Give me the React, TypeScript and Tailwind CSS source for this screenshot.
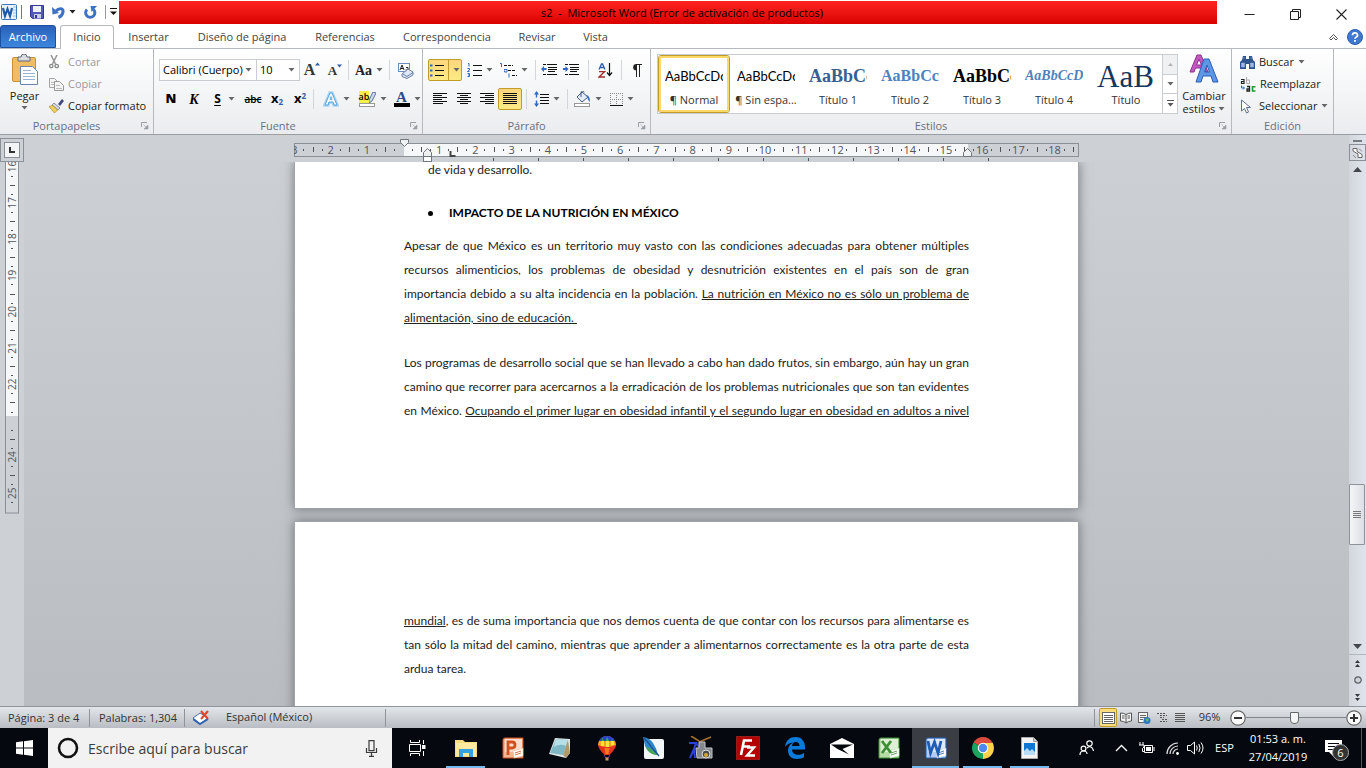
import React from 'react';
import type { ReactNode } from 'react';

const INK = '#3b3b3b';

/* ---------- small building blocks ---------- */

function Svg({ w, h, children }: { w: number; h: number; children: ReactNode }) {
  return (
    <svg width={w} height={h} viewBox={`0 0 ${w} ${h}`} className="block shrink-0" aria-hidden="true">
      {children}
    </svg>
  );
}

function Caret({ color = '#666' }: { color?: string }) {
  return (
    <Svg w={7} h={4}>
      <path d="M0.5 0h6L3.5 3.5z" fill={color} />
    </Svg>
  );
}

interface ToolProps {
  label: string;
  width: string;
  caret?: boolean;
  active?: boolean;
  children: ReactNode;
}

function Tool({ label, width, caret, active, children }: ToolProps) {
  return (
    <button
      type="button"
      aria-label={label}
      className={`flex h-[22px] shrink-0 items-center justify-center gap-1 ${width} ${
        active ? 'rounded-[2px] border border-[#c29b29] bg-linear-to-b from-[#fbd67c] to-[#fdea87]' : ''
      }`}
    >
      {children}
      {active && caret && <span className="h-full w-px bg-[#c29b29]" />}
      {caret && <Caret />}
    </button>
  );
}

function Sep() {
  return <span className="mx-[2px] h-5 w-px shrink-0 bg-[#d3d6da]" />;
}

function Launcher({ label }: { label: string }) {
  return (
    <button type="button" aria-label={label} className="absolute right-1 bottom-1">
      <Svg w={9} h={9}>
        <path d="M1.5 6V1.5H7" fill="none" stroke="#999ea5" />
        <path d="M3.5 3.5l3 3M8 4v4H4z" fill="#999ea5" stroke="#999ea5" strokeWidth="0.6" />
      </Svg>
    </button>
  );
}

interface GroupProps {
  title: string;
  width: string;
  launcher?: boolean;
  children: ReactNode;
}

function Group({ title, width, launcher, children }: GroupProps) {
  return (
    <section
      aria-label={title}
      className={`relative flex shrink-0 flex-col border-r border-[#b6babf] ${width}`}
    >
      <div className="flex-1">{children}</div>
      <div className={`h-4 text-center leading-4 text-[#6a6f80] ${launcher ? 'pr-5' : ''}`}>{title}</div>
      {launcher && <Launcher label={`Opciones de ${title}`} />}
    </section>
  );
}

/* ---------- title bar ---------- */

function WordLogo() {
  return (
    <Svg w={16} h={16}>
      <rect x="0.5" y="0.5" width="15" height="15" rx="1" fill="#e9f2fb" stroke="#3b78b9" />
      <path d="M12 3h3M12 6h3M12 9h3M12 12h3" stroke="#9dbfe3" />
      <path d="M2 4l2 8 2.5-7 2.5 7 2-8" fill="none" stroke="#1e5aa8" strokeWidth="2.200" />
    </Svg>
  );
}

function TitleBar() {
  return (
    <header className="flex h-6 shrink-0 bg-white">
      <div className="flex w-[119px] shrink-0 items-center pl-px">
        <WordLogo />
        <span className="mx-1 h-[14px] w-px bg-[#777]" />
        <button type="button" aria-label="Guardar" className="ml-1">
          <Svg w={14} h={14}>
            <path d="M0.5 0.5h13v13h-11l-2-2z" fill="#5458b8" stroke="#34378f" />
            <path d="M3 1h8v6H3z" fill="#eef2fb" />
            <path d="M4 9h7v4.500H4z" fill="#c9cfe8" />
            <path d="M5 10h2v3H5z" fill="#34378f" />
          </Svg>
        </button>
        <button type="button" aria-label="Deshacer" className="ml-2 flex items-center gap-1">
          <Svg w={13} h={13}>
            <path d="M4 5C7 1.500 11.500 2 11 6 10.700 8.500 9 10.500 6.500 11.500" fill="none" stroke="#3d72c6" strokeWidth="3" />
            <path d="M0 1l.5 7.500L7 7z" fill="#3d72c6" />
          </Svg>
          <Caret color="#222" />
        </button>
        <button type="button" aria-label="Rehacer" className="ml-2">
          <Svg w={13} h={13}>
            <path d="M3 3.500a4.600 4.600 0 1 0 6.500 0" fill="none" stroke="#3d72c6" strokeWidth="3" />
            <path d="M6.500 0H13L7.500 6z" fill="#3d72c6" />
          </Svg>
        </button>
        <span className="ml-2 h-[14px] w-px bg-[#999]" />
        <button type="button" aria-label="Personalizar barra" className="ml-1">
          <Svg w={7} h={8}>
            <path d="M0 0.500h7" stroke="#111" />
            <path d="M0 3.500h7L3.500 7z" fill="#111" />
          </Svg>
        </button>
      </div>
      <h1 className="mt-px flex flex-1 items-center justify-center overflow-hidden bg-linear-to-b from-[#ff231f] to-[#d90000] pt-px pl-7 whitespace-pre text-black">
        {'s2  -  Microsoft Word (Error de activación de productos)'}
      </h1>
      <div className="flex w-[149px] shrink-0 items-end justify-end pr-[2px]">
        <button type="button" aria-label="Minimizar" className="flex w-[46px] justify-center pb-1">
          <Svg w={11} h={11}>
            <path d="M0.500 5.500h10" stroke="#222" />
          </Svg>
        </button>
        <button type="button" aria-label="Restaurar" className="flex w-[46px] justify-center pb-1">
          <Svg w={11} h={11}>
            <path d="M0.500 2.500h8v8h-8zM2.500 2.500v-2h8v8h-2" fill="none" stroke="#222" />
          </Svg>
        </button>
        <button type="button" aria-label="Cerrar" className="flex w-[46px] justify-center pb-1">
          <Svg w={11} h={11}>
            <path d="M0.500 0.500l10 10M10.500 0.500l-10 10" stroke="#222" strokeWidth="1.100" />
          </Svg>
        </button>
      </div>
    </header>
  );
}

/* ---------- tabs ---------- */

const TABS = [
  { name: 'Insertar', width: 'w-[69px]' },
  { name: 'Diseño de página', width: 'w-[118px]' },
  { name: 'Referencias', width: 'w-[88px]' },
  { name: 'Correspondencia', width: 'w-[116px]' },
  { name: 'Revisar', width: 'w-16' },
  { name: 'Vista', width: 'w-[53px]' },
];

function TabRow() {
  return (
    <nav className="flex h-[25px] shrink-0 items-stretch border-b border-[#b6babf] bg-white pt-px text-[#444]">
      <button
        type="button"
        className="w-14 rounded-t-[3px] border border-[#1d4f9f] bg-linear-to-b from-[#2a62bb] to-[#3c86dc] pt-px text-white"
      >
        Archivo
      </button>
      <button
        type="button"
        className="-mb-px ml-1 w-[54px] rounded-t-[3px] border border-b-0 border-[#b6babf] bg-white"
      >
        Inicio
      </button>
      {TABS.map((tab) => (
        <button key={tab.name} type="button" className={`pt-[2px] whitespace-nowrap ${tab.width}`}>
          {tab.name}
        </button>
      ))}
      <div className="ml-auto flex items-center gap-2 pr-[3px]">
        <button type="button" aria-label="Minimizar cinta">
          <Svg w={11} h={8}>
            <path d="M1.500 5.500l4-4 4 4-1.500 1.500-2.500-2.500L3 7z" fill="#fff" stroke="#555" />
          </Svg>
        </button>
        <button type="button" aria-label="Ayuda">
          <Svg w={16} h={16}>
            <circle cx="8" cy="8" r="7.500" fill="#3f78d0" stroke="#2c5fb4" />
            <path d="M5.500 6.200a2.500 2.300 0 1 1 3.500 2.100q-1 .5-1 1.400" fill="none" stroke="#fff" strokeWidth="1.700" />
            <rect x="7.100" y="11" width="1.800" height="1.800" fill="#fff" />
          </Svg>
        </button>
      </div>
    </nav>
  );
}

/* ---------- ribbon groups ---------- */

function Clipboard() {
  return (
    <Group title="Portapapeles" width="w-[154px]" launcher>
      <div className="flex pt-[2px]">
        <button type="button" className="flex w-[49px] flex-col items-center pt-[3px] text-[#222]">
          <Svg w={28} h={32}>
            <rect x="1.500" y="3.500" width="23" height="24" rx="1.500" fill="#f0bd62" stroke="#c98f36" />
            <path d="M7 3h3a3 3 0 0 1 6 0h3v4H7z" fill="#d9dde2" stroke="#60666e" />
            <path d="M9.500 12.500h12l5 5v13h-17z" fill="#fff" stroke="#7084a5" />
            <path d="M12 16.500h8M12 19.500h12M12 22.500h12M12 25.500h12" stroke="#9db3d4" />
          </Svg>
          <span className="mt-[2px] leading-4">Pegar</span>
          <span className="mt-[2px]">
            <Caret />
          </span>
        </button>
        <div className="flex flex-col">
          <button type="button" disabled className="flex h-[22px] items-center gap-[9px] text-[#9a9a9a]">
            <Svg w={10} h={14}>
              <path d="M2 0l4.500 9M8 0L3.500 9" stroke="#9a9a9a" strokeWidth="1.600" />
              <circle cx="2.300" cy="11" r="1.700" fill="none" stroke="#888" strokeWidth="1.300" />
              <circle cx="7.700" cy="11" r="1.700" fill="none" stroke="#888" strokeWidth="1.300" />
            </Svg>
            Cortar
          </button>
          <button type="button" disabled className="flex h-[22px] items-center gap-1 text-[#9a9a9a]">
            <Svg w={15} h={13}>
              <path d="M0.500 0.500h5l3 3v6h-8z" fill="#f4f4f4" stroke="#a5a5a5" />
              <path d="M5.500 3.500h5l4 4v5h-9z" fill="#f4f4f4" stroke="#999" />
              <path d="M7 7.500h4M7 10.500h6M2 4.500h3M2 6.500h3" stroke="#bbb" />
            </Svg>
            Copiar
          </button>
          <button type="button" className="flex h-[22px] items-center gap-1 whitespace-nowrap text-[#222]">
            <Svg w={15} h={14}>
              <path d="M9 5l4-5 2 2-4 5z" fill="#444a7c" />
              <path d="M5 4l6 5-2 2-6-5z" fill="#d3d7de" stroke="#73798a" strokeWidth="0.800" />
              <path d="M3.500 6.500l5 4.500-3 3L0 7.500z" fill="#efd25d" stroke="#b9912b" strokeWidth="0.800" />
            </Svg>
            Copiar formato
          </button>
        </div>
      </div>
    </Group>
  );
}

function Combo({ label, value, width }: { label: string; value: string; width: string }) {
  return (
    <div className={`relative h-[22px] border border-[#c9ccd1] bg-white ${width}`}>
      <select aria-label={label} defaultValue={value} className="h-full w-full appearance-none pl-[3px] text-black">
        <option>{value}</option>
      </select>
      <span className="pointer-events-none absolute top-2 right-1">
        <Caret />
      </span>
    </div>
  );
}

function FontGroup() {
  return (
    <Group title="Fuente" width="w-[269px]" launcher>
      <div className="flex items-center pt-[10px] pl-[5px]">
        <Combo label="Fuente" value="Calibri (Cuerpo)" width="w-[98px]" />
        <Combo label="Tamaño de fuente" value="10" width="-ml-px w-11" />
        <Tool label="Agrandar fuente" width="w-6">
          <span className="flex font-['Liberation_Serif'] text-[16px] leading-none font-bold text-[#333]">
            A
            <Svg w={5} h={4}>
              <path d="M0 3.500L2.500 0.500 5 3.500z" fill="#2f5da8" />
            </Svg>
          </span>
        </Tool>
        <Tool label="Encoger fuente" width="w-[22px]">
          <span className="flex font-['Liberation_Serif'] text-[13px] leading-none font-bold text-[#333]">
            A
            <Svg w={5} h={4}>
              <path d="M0 0.500L2.500 3.500 5 0.500z" fill="#2f5da8" />
            </Svg>
          </span>
        </Tool>
        <Sep />
        <Tool label="Cambiar mayúsculas" width="w-9" caret>
          <span className="font-['Liberation_Serif'] text-[14px] font-bold text-[#222]">Aa</span>
        </Tool>
        <Sep />
        <Tool label="Borrar formato" width="w-7">
          <Svg w={16} h={17}>
            <rect x="0.500" y="1.500" width="11" height="8" fill="#fff" stroke="#6d8cc0" />
            <path d="M2 8l2-5 2 5M2.500 6.500h3M8 5.500h2V8H7.500" fill="none" stroke="#222" />
            <path d="M4 12l6-5 5 3v3l-6 3.500-5-2z" fill="#dfe8f6" stroke="#6a7fa8" />
            <path d="M5 12l4 2.500 6-4" fill="none" stroke="#6a7fa8" />
          </Svg>
        </Tool>
      </div>
      <div className="flex items-center pt-[7px] pl-[5px] text-black">
        <Tool label="Negrita" width="w-6">
          <span className="text-[13px] font-extrabold">N</span>
        </Tool>
        <Tool label="Cursiva" width="w-[22px]">
          <span className="font-['Liberation_Serif'] text-[14px] font-bold italic">K</span>
        </Tool>
        <Tool label="Subrayado" width="w-9" caret>
          <span className="w-3 text-center text-[12px] font-bold underline underline-offset-2">S</span>
        </Tool>
        <Tool label="Tachado" width="w-6">
          <span className="text-[10px] font-semibold line-through">abc</span>
        </Tool>
        <Tool label="Subíndice" width="w-6">
          <span className="text-[13px] font-bold">
            x<sub className="text-[8px] text-[#2f5da8]">2</sub>
          </span>
        </Tool>
        <Tool label="Superíndice" width="w-[22px]">
          <span className="text-[13px] font-bold">
            x<sup className="text-[8px] text-[#2f5da8]">2</sup>
          </span>
        </Tool>
        <Sep />
        <Tool label="Efectos de texto" width="w-10" caret>
          <Svg w={16} h={16}>
            <path d="M2 14L7 2h2l5 12h-3l-1-3H6l-1 3z" fill="#fff" stroke="#a9d5f5" strokeWidth="3.500" />
            <path d="M2 14L7 2h2l5 12h-3l-1-3H6l-1 3z" fill="#f5fbff" stroke="#4d9bd6" strokeWidth="0.900" />
            <path d="M7 8.500h2L8 5.500z" fill="#fff" stroke="#4d9bd6" strokeWidth="0.800" />
          </Svg>
        </Tool>
        <Tool label="Color de resaltado" width="w-[34px]" caret>
          <span className="flex flex-col">
            <span className="flex h-3 items-end">
              <span className="bg-[#f8f04a] text-[9px] leading-3 font-semibold">ab</span>
              <Svg w={7} h={11}>
                <path d="M4 0l3 1-4 8-3 2V8z" fill="#cfdaec" stroke="#4d618e" strokeWidth="0.900" />
              </Svg>
            </span>
            <span className="h-1 w-4 border border-[#999] bg-white" />
          </span>
        </Tool>
        <Tool label="Color de fuente" width="w-[34px]" caret>
          <span className="flex flex-col items-center">
            <span className="h-3 font-['Liberation_Serif'] text-[15px] leading-3 font-bold text-[#2b4d8c]">A</span>
            <span className="h-1 w-4 bg-black" />
          </span>
        </Tool>
      </div>
    </Group>
  );
}

function Lines({ rows }: { rows: string }) {
  return (
    <Svg w={16} h={14}>
      <path d={rows} stroke="#111" strokeWidth="1" />
    </Svg>
  );
}

function IndentIcon({ right }: { right?: boolean }) {
  return (
    <Svg w={16} h={14}>
      <path d="M2 1.500h3M6 1.500h10M7 4.500h9M7 6.500h9M7 8.500h7M2 11.500h3M6 11.500h10" stroke="#111" />
      <path d={right ? 'M5.500 6L2.500 3v2H0v2h2.500v2z' : 'M0 6l3-3v2h2.500v2H3v2z'} fill="#2f67c4" />
    </Svg>
  );
}

function ParagraphGroup() {
  return (
    <Group title="Párrafo" width="w-[228px]" launcher>
      <div className="flex items-center pt-[10px] pl-[5px]">
        <Tool label="Viñetas" width="w-[34px]" caret active>
          <Svg w={14} h={14}>
            <path d="M5 2.500h9M5 7.500h9M5 12.500h9" stroke="#111" />
            <path d="M0 1.500h2.500v2H0zM0 6.500h2.500v2H0zM0 11.500h2.500v2H0z" fill="#2f67c4" />
          </Svg>
        </Tool>
        <Tool label="Numeración" width="w-9" caret>
          <Svg w={15} h={14}>
            <path d="M6 2.500h9M6 7.500h9M6 12.500h9" stroke="#111" />
            <path d="M1 .5h1v3M.5 5.500h2v1.500L.5 8.500h2M.5 10.500h2v3h-2M1 12h1.500" fill="none" stroke="#2f67c4" />
          </Svg>
        </Tool>
        <Tool label="Lista multinivel" width="w-[31px]" caret>
          <Svg w={17} h={15}>
            <path d="M4 2.500h9M8 7.500h8M12 12.500h5" stroke="#111" strokeDasharray="3 1" />
            <path d="M0 .5h1.500v3.500M4 6.500h3V9H4.500V7.500M9 10.500v4" fill="none" stroke="#2f67c4" />
          </Svg>
        </Tool>
        <span className="w-1" />
        <Sep />
        <Tool label="Disminuir sangría" width="w-[22px]">
          <IndentIcon />
        </Tool>
        <Tool label="Aumentar sangría" width="w-[22px]">
          <IndentIcon right />
        </Tool>
        <span className="w-1" />
        <Sep />
        <Tool label="Ordenar" width="w-7">
          <span className="flex items-center">
            <Svg w={8} h={15}>
              <path d="M1 6.500L3.500 1h1L7 6.500M2 4.500h4" fill="none" stroke="#2f5da8" strokeWidth="1.300" />
              <path d="M1 8.700h5.500L1 14h6" fill="none" stroke="#9c2c2c" strokeWidth="1.300" />
            </Svg>
            <Svg w={7} h={14}>
              <path d="M3.500 0v12M1 9.500l2.500 3L6 9.500" fill="none" stroke="#111" strokeWidth="1.200" />
            </Svg>
          </span>
        </Tool>
        <Sep />
        <Tool label="Mostrar todo" width="w-6">
          <Svg w={11} h={13}>
            <path d="M5 0.500h6M5.500 0v13M8.500 0v13" stroke="#222" />
            <path d="M5.500 0a3.300 3.300 0 1 0 0 6.600z" fill="#222" />
          </Svg>
        </Tool>
      </div>
      <div className="flex items-center pt-[7px] pl-[5px]">
        <Tool label="Alinear a la izquierda" width="w-6">
          <Lines rows="M1 1.500h14M1 3.500h9M1 5.500h14M1 7.500h9M1 9.500h14M1 11.500h10" />
        </Tool>
        <Tool label="Centrar" width="w-6">
          <Lines rows="M1 1.500h14M4 3.500h8M1 5.500h14M4 7.500h8M1 9.500h14M4 11.500h8" />
        </Tool>
        <Tool label="Alinear a la derecha" width="w-[22px]">
          <Lines rows="M1 1.500h14M6 3.500h9M1 5.500h14M6 7.500h9M1 9.500h14M6 11.500h9" />
        </Tool>
        <Tool label="Justificar" width="w-6" active>
          <Lines rows="M1 1.500h14M1 3.500h14M1 5.500h14M1 7.500h14M1 9.500h14M1 11.500h14" />
        </Tool>
        <span className="w-[2px]" />
        <Sep />
        <Tool label="Interlineado" width="w-9" caret>
          <Svg w={15} h={16}>
            <path d="M6 3.500h9M6 6.500h9M6 9.500h9M6 12.500h9" stroke="#111" />
            <path d="M2.500 0L5 3.500H3.200v3H1.800v-3H0zM2.500 16L5 12.500H3.200v-3H1.800v3H0z" fill="#2f67c4" />
          </Svg>
        </Tool>
        <Sep />
        <Tool label="Sombreado" width="w-9" caret>
          <Svg w={17} h={16}>
            <path d="M3 6l5-5 6 5-6 5z" fill="#e5ecf6" stroke="#44598a" />
            <path d="M7 6V1.500a1.500 1.500 0 0 1 3 0" fill="none" stroke="#44598a" />
            <path d="M12 4q4 0 4 7-2-1-3-5z" fill="#3a6fc0" />
            <rect x="0.500" y="12.500" width="15" height="3" fill="#fff" stroke="#999" />
          </Svg>
        </Tool>
        <Tool label="Bordes" width="w-8" caret>
          <Svg w={13} h={13}>
            <path d="M.5 0v12M6.500 0v12M12.500 0v12M0 .5h13M0 6.500h13" stroke="#888" strokeDasharray="1 1" />
            <path d="M0 12.500h13" stroke="#111" />
          </Svg>
        </Tool>
      </div>
    </Group>
  );
}

const STYLES = [
  { name: '¶ Normal', sample: 'AaBbCcDc', look: "font-['Lato'] text-[13px] text-black" },
  { name: '¶ Sin espa...', sample: 'AaBbCcDc', look: "font-['Lato'] text-[13px] text-black" },
  { name: 'Título 1', sample: 'AaBbCc', look: "font-['Liberation_Serif'] text-[18px] font-bold text-[#365f91]" },
  { name: 'Título 2', sample: 'AaBbCc', look: "font-['Liberation_Serif'] text-[16px] font-bold text-[#4f81bd]" },
  { name: 'Título 3', sample: 'AaBbCc', look: "font-['Liberation_Serif'] text-[18px] font-bold text-black" },
  { name: 'Título 4', sample: 'AaBbCcD', look: "font-['Liberation_Serif'] text-[14px] font-bold italic text-[#4f81bd]" },
  { name: 'Título', sample: 'AaB', look: "font-['Liberation_Serif'] text-[31px] text-[#17365d]" },
];

function StylesGroup() {
  return (
    <Group title="Estilos" width="w-[581px]" launcher>
      <div className="flex pt-[5px] pl-[6px]">
        <div className="flex h-[60px] w-[521px] border border-[#c9ccd1] bg-white">
          {STYLES.map((style, i) => (
            <button
              key={style.name}
              type="button"
              className={`flex w-[72px] flex-col items-center overflow-hidden rounded-[3px] px-[3px] pt-[4px] ${
                i === 0 ? 'border border-[#c29b29] outline-2 -outline-offset-3 outline-[#fbd867]' : 'border border-transparent'
              }`}
            >
              <span className={`flex h-8 w-[58px] items-center overflow-hidden leading-none whitespace-nowrap ${style.look}`}>
                {style.sample}
              </span>
              <span className="leading-4 whitespace-nowrap text-[#333]">{style.name}</span>
            </button>
          ))}
          <div className="flex flex-1 flex-col divide-y divide-[#c9ccd1] border-l border-[#c9ccd1]">
            <button type="button" aria-label="Arriba" className="flex flex-1 items-center justify-center bg-[#f0f1f3]">
              <Svg w={5} h={3}>
                <path d="M0 3h5L2.500 0z" fill="#b0b3b8" />
              </Svg>
            </button>
            <button type="button" aria-label="Abajo" className="flex flex-1 items-center justify-center">
              <Caret />
            </button>
            <button type="button" aria-label="Más estilos" className="flex flex-1 items-center justify-center">
              <Svg w={7} h={7}>
                <path d="M0 .5h7" stroke="#555" />
                <path d="M.5 3h6L3.500 6.500z" fill="#555" />
              </Svg>
            </button>
          </div>
        </div>
        <button type="button" className="flex w-[52px] flex-col items-center text-[#222]">
          <Svg w={30} h={30}>
            <path d="M1 18L8 1h4l7 17h-4l-1.500-4h-7L5 18zM7.500 11h5L10 5z" fill="#c45ac0" stroke="#8e2d91" />
            <path d="M7 28L15 5h5l9 23h-5l-2-6h-8l-2 6zM15.500 18h5l-2.500-7z" fill="#5d97e6" stroke="#2b5fb5" />
          </Svg>
          <span className="mt-[5px] leading-[13px]">Cambiar</span>
          <span className="flex items-center gap-[3px] leading-[13px]">
            estilos <Caret />
          </span>
        </button>
      </div>
    </Group>
  );
}

function EditingGroup() {
  return (
    <Group title="Edición" width="w-[102px]">
      <div className="flex flex-col pt-[2px] pl-2 text-[#222]">
        <button type="button" className="flex h-[22px] items-center gap-1">
          <Svg w={15} h={13}>
            <path d="M3 0h3v3h3V0h3l1 4 2 2v7H9V8H6v5H0V6l2-2z" fill="#2e538f" />
            <path d="M1.500 7h3v4h-3zM10.500 7h3v4h-3zM4 1v2M11 1v2" fill="#9db9e2" stroke="#9db9e2" strokeWidth="0.500" />
          </Svg>
          Buscar <Caret />
        </button>
        <button type="button" className="flex h-[22px] items-center gap-1">
          <Svg w={16} h={15}>
            <path d="M1 2.500h3v4H1.500v-2H4" fill="none" stroke="#222" strokeWidth="1.200" />
            <path d="M6.500 0v6.500h3v-3.500H7" fill="none" stroke="#aaa" />
            <path d="M1.500 8.500v2.500H4M3 9.500L4.500 11 3 12.500" fill="none" stroke="#2f67c4" />
            <path d="M7 9.500h2.500v4.500H7v-2h2.500" fill="none" stroke="#222" strokeWidth="1.300" />
            <path d="M15.500 9.700h-3v4.300h3" fill="none" stroke="#1d9c2c" strokeWidth="1.600" />
          </Svg>
          <span>Reemplazar</span>
        </button>
        <button type="button" className="flex h-[22px] items-center gap-2">
          <Svg w={11} h={15}>
            <path d="M1.500 1v11l3-2.500 2 4.500 2-1-2-4.500h4z" fill="#fff" stroke="#5b7093" />
          </Svg>
          <span>Seleccionar</span>
          <span className="-ml-1">
            <Caret />
          </span>
        </button>
      </div>
    </Group>
  );
}

/* ---------- work area ---------- */

const CM = 36.2;

function scaleMarks(origin: number, from: number, to: number, step: number) {
  const marks: { at: number; n: number; kind: 'num' | 'half' | 'dot' }[] = [];
  for (let q = from * 4; q <= to * 4; q += 1) {
    const kind = q % 4 === 0 ? 'num' : q % 2 === 0 ? 'half' : 'dot';
    marks.push({ at: origin + (q / 4) * step, n: Math.abs(q / 4), kind });
  }
  return marks;
}

function HorizontalRuler() {
  const marks = scaleMarks(109, -3, 18.5, CM).filter((m) => !(m.kind === 'num' && m.n === 0));
  return (
    <svg width="785" height="24" viewBox="0 0 785 24" className="block" aria-label="Regla horizontal">
      <rect x="0.5" y="5.5" width="784" height="13" fill="#cdd0d5" stroke="#8a9097" />
      <rect x="110" y="6" width="564" height="12" fill="#f6f7f8" />
      {marks.map((m) =>
        m.kind === 'num' ? (
          <text key={m.at} x={m.at} y="16" textAnchor="middle" fontSize="11" fill="#50555c">
            {m.n}
          </text>
        ) : (
          <rect
            key={m.at}
            x={Math.round(m.at)}
            y={m.kind === 'half' ? 9 : 11}
            width="1"
            height={m.kind === 'half' ? 5 : 2}
            fill="#50555c"
          />
        ),
      )}
      {Array.from({ length: 12 }, (_, i) => (
        <rect key={i} x={200 + i * 45 - 1} y="20" width="1" height="3" fill="#50555c" />
      ))}
      <path d="M156.500 13v5h5" fill="none" stroke="#444" strokeWidth="2" />
      <path d="M106.500 1.500h8v3l-4 4-4-4z" fill="#eef0f2" stroke="#71767d" />
      <path d="M129.500 18.500v-4l4-4 4 4v4z" fill="#eef0f2" stroke="#71767d" />
      <rect x="129.500" y="18.500" width="8" height="5" fill="#fff" stroke="#71767d" />
      <path d="M669.500 18.500v-4l4-4 4 4v4z" fill="#eef0f2" stroke="#71767d" />
    </svg>
  );
}

function VerticalRuler() {
  const marks = scaleMarks(4.5, 0, 9.25, 36.3).filter((m) => !(m.kind === 'num' && m.n === 7));
  return (
    <svg width="14" height="352" viewBox="0 0 14 352" className="block" aria-label="Regla vertical">
      <rect x="0.5" y="-1" width="13" height="352" fill="#cdd0d5" stroke="#8a9097" />
      <rect x="1" y="0" width="12" height="254" fill="#f6f7f8" />
      {marks.map((m) =>
        m.kind === 'num' ? (
          <text
            key={m.at}
            x="0"
            y="0"
            transform={`translate(11 ${m.at}) rotate(-90)`}
            textAnchor="middle"
            fontSize="10"
            fill="#50555c"
          >
            {m.n + 16}
          </text>
        ) : (
          <rect
            key={m.at}
            x={m.kind === 'half' ? 5 : 6}
            y={Math.round(m.at)}
            width={m.kind === 'half' ? 5 : 2}
            height="1"
            fill="#50555c"
          />
        ),
      )}
    </svg>
  );
}

function Line({ children, last }: { children: ReactNode; last?: boolean }) {
  return (
    <span className={`block whitespace-nowrap ${last ? '' : '[text-align-last:justify]'}`}>{children}</span>
  );
}

const SHEET = 'mx-auto w-[785px] border border-[#a0a4aa] bg-white pr-[109px] pl-[109px] shadow-[0_0_10px_rgba(60,65,72,0.6)]';

function Pages() {
  return (
    <main className="min-h-0 flex-1 overflow-hidden font-['Lato',sans-serif] text-[12px] leading-6 text-[#222] [font-variant-ligatures:none]">
      <article className={`h-[347px] border-t-0 ${SHEET}`}>
        <p className="pl-6 leading-4">de vida y desarrollo.</p>
        <h2 className="mt-[23px] flex items-center pl-6 font-bold text-black">
          <span className="mr-4 size-[5px] rounded-full bg-black" />
          IMPACTO DE LA NUTRICIÓN EN MÉXICO
        </h2>
        <p className="mt-[9px]">
          <Line>Apesar de que México es un territorio muy vasto con las condiciones adecuadas para obtener múltiples</Line>
          <Line>recursos alimenticios, los problemas de obesidad y desnutrición existentes en el país son de gran</Line>
          <Line>
            importancia debido a su alta incidencia en la población. <u>La nutrición en México no es sólo un problema de</u>
          </Line>
          <Line last>
            <u className="whitespace-pre">alimentación, sino de educación. </u>
          </Line>
        </p>
        <p className="mt-[21px]">
          <Line>Los programas de desarrollo social que se han llevado a cabo han dado frutos, sin embargo, aún hay un gran</Line>
          <Line>camino que recorrer para acercarnos a la erradicación de los problemas nutricionales que son tan evidentes</Line>
          <Line>
            en México. <u>Ocupando el primer lugar en obesidad infantil y el segundo lugar en obesidad en adultos a nivel</u>
          </Line>
        </p>
      </article>
      <article className={`mt-3 h-[400px] pt-[87px] ${SHEET}`}>
        <p>
          <Line>
            <u>mundial</u>, es de suma importancia que nos demos cuenta de que contar con los recursos para alimentarse es
          </Line>
          <Line>tan sólo la mitad del camino, mientras que aprender a alimentarnos correctamente es la otra parte de esta</Line>
          <Line last>ardua tarea.</Line>
        </p>
      </article>
    </main>
  );
}

function ScrollColumn() {
  return (
    <aside className="flex w-[17px] shrink-0 flex-col items-center bg-linear-to-r from-[#d3d7dd] to-[#dfe3ec]">
      <span className="mt-[5px] h-[2px] w-[9px] bg-[#777c84]" />
      <button type="button" aria-label="Regla" className="mt-[2px] border border-[#8a9097] p-[2px]">
        <Svg w={11} h={11}>
          <path d="M1 1.500h4v3l5 3v3H6V7L1 4z" fill="#fff" stroke="#666" />
          <path d="M7 1.500l3 3M1 8l3 3" stroke="#888" />
        </Svg>
      </button>
      <button type="button" aria-label="Desplazar arriba" className="mt-[6px]">
        <Svg w={9} h={5}>
          <path d="M0 5h9L4.500 0z" fill="#44484e" />
        </Svg>
      </button>
      <div className="flex w-full flex-1 flex-col">
        <div className="flex-[310]" />
        <div className="flex h-[61px] w-4 flex-col items-center justify-center gap-px rounded-[1px] border border-[#8d929b] bg-linear-to-r from-[#f4f5f7] to-[#dcdfe5]">
          <span className="h-px w-2 bg-[#777]" />
          <span className="h-px w-2 bg-[#777]" />
          <span className="h-px w-2 bg-[#777]" />
          <span className="h-px w-2 bg-[#777]" />
        </div>
        <div className="flex-[98]" />
      </div>
      <button type="button" aria-label="Desplazar abajo">
        <Svg w={9} h={5}>
          <path d="M0 0h9L4.500 5z" fill="#44484e" />
        </Svg>
      </button>
      <div className="mt-[5px] flex h-[52px] w-full flex-col items-center justify-around border-t border-[#b2b6bd]">
        <button type="button" aria-label="Página anterior">
          <Svg w={7} h={7}>
            <path d="M1 3h5L3.500 0zM1 7h5L3.500 4z" fill="#33373d" />
          </Svg>
        </button>
        <button type="button" aria-label="Objeto de búsqueda">
          <Svg w={8} h={8}>
            <circle cx="4" cy="4" r="3.200" fill="#d0d3d8" stroke="#5c6168" strokeWidth="1.200" />
          </Svg>
        </button>
        <button type="button" aria-label="Página siguiente">
          <Svg w={7} h={7}>
            <path d="M1 0h5L3.500 3zM1 4h5L3.500 7z" fill="#33373d" />
          </Svg>
        </button>
      </div>
    </aside>
  );
}

function WorkArea() {
  return (
    <div className="flex min-h-0 flex-1 overflow-hidden border-t border-[#9a9ea4] bg-linear-to-b from-[#cdd1d5] to-[#b9bcc0]">
      <div className="flex w-6 shrink-0 flex-col items-center bg-[#cdd1d5] pt-[3px]">
        <button type="button" aria-label="Tabulación" className="h-6 w-6 border border-[#8a9097] p-[3px]">
          <span className="flex h-full w-full items-center justify-center border border-[#8a9097] bg-[#f3f4f5]">
            <Svg w={6} h={6}>
              <path d="M1 0v5h5" fill="none" stroke="#333" strokeWidth="2" />
            </Svg>
          </span>
        </button>
        <VerticalRuler />
      </div>
      <div className="flex min-w-0 flex-1 flex-col">
        <div className="flex h-[27px] shrink-0 justify-center pt-[3px]">
          <HorizontalRuler />
        </div>
        <Pages />
      </div>
      <ScrollColumn />
    </div>
  );
}

/* ---------- status bar ---------- */

function ViewButton({ label, active, children }: { label: string; active?: boolean; children: ReactNode }) {
  return (
    <button
      type="button"
      aria-label={label}
      className={`flex h-[19px] w-[18px] shrink-0 items-center justify-center ${
        active ? 'rounded-[2px] border border-[#c29b29] bg-[#fcdc7c]' : ''
      }`}
    >
      {children}
    </button>
  );
}

function StatusBar() {
  const divider = 'border-r border-[#8f949b]';
  return (
    <footer className="flex h-[22px] shrink-0 items-center border-t border-[#8f949b] bg-linear-to-b from-[#e3e6ea] to-[#b9bdc3] text-[#333]">
      <div className={`h-[18px] w-[90px] pl-2 leading-[18px] ${divider}`}>Página: 3 de 4</div>
      <div className={`h-[18px] w-[95px] pl-[9px] leading-[18px] ${divider}`}>Palabras: 1,304</div>
      <div className={`flex h-[18px] w-[201px] items-center gap-4 pl-2 ${divider}`}>
        <Svg w={17} h={15}>
          <path d="M0 8l7-5 8 5-8 6z" fill="#fff" stroke="#4671b8" />
          <path d="M0 9l7 5 8-5" fill="none" stroke="#3161b5" strokeWidth="2" />
          <path d="M8 1l7 8M15 1L8 9" stroke="#e4452c" strokeWidth="2" />
        </Svg>
        Español (México)
      </div>
      <div className={`h-[18px] flex-1 ${divider}`} />
      <div className="flex w-[271px] shrink-0 items-center pl-1">
        <ViewButton label="Diseño de impresión" active>
          <Svg w={13} h={12}>
            <rect x="0.500" y="0.500" width="12" height="11" fill="#fff" stroke="#666" />
            <path d="M2 3.500h9M2 5.500h9M2 7.500h9M2 9.500h9" stroke="#666" />
          </Svg>
        </ViewButton>
        <ViewButton label="Lectura">
          <Svg w={12} h={12}>
            <path d="M.5 1q3 0 5.500 1.500Q8.500 1 11.500 1v8Q8 9 6 11 4 9 .5 9zM6 2.500V11M2 4h2.500M2 6h2.500M7.500 4H10M7.500 6H10" fill="#f4f4f4" stroke="#555" />
          </Svg>
        </ViewButton>
        <ViewButton label="Diseño web">
          <Svg w={13} h={12}>
            <rect x="0.500" y="0.500" width="9" height="10" fill="#f4f4f4" stroke="#666" />
            <path d="M2 3.500h6M2 5.500h6M2 7.500h3" stroke="#666" />
            <circle cx="9" cy="8.500" r="3.500" fill="#2e74c4" />
            <path d="M7 7l3-1 1 2-2 2z" fill="#5bb368" />
          </Svg>
        </ViewButton>
        <ViewButton label="Esquema">
          <Svg w={10} h={11}>
            <path d="M0 1.500h8M3 3.500h7M3 5.500h4M5 7.500h5M3 9.500h7" stroke="#555" strokeDasharray="2 1" />
          </Svg>
        </ViewButton>
        <ViewButton label="Borrador">
          <Svg w={10} h={11}>
            <path d="M0 1.500h10M0 3.500h10M0 5.500h10M0 7.500h10M0 9.500h10" stroke="#555" />
          </Svg>
        </ViewButton>
        <span className="w-[41px] shrink-0 text-center">96%</span>
        <button type="button" aria-label="Alejar">
          <Svg w={16} h={16}>
            <circle cx="8" cy="8" r="7.200" fill="#fafafa" stroke="#666" strokeWidth="1.200" />
            <path d="M4 8h8" stroke="#333" strokeWidth="2" />
          </Svg>
        </button>
        <input
          type="range"
          aria-label="Zoom"
          defaultValue={48}
          className="h-4 w-[100px] appearance-none bg-transparent bg-linear-to-b from-[#7f858d] to-[#7f858d] bg-[length:100%_1px] bg-center bg-no-repeat [&::-webkit-slider-thumb]:h-3 [&::-webkit-slider-thumb]:w-[9px] [&::-webkit-slider-thumb]:appearance-none [&::-webkit-slider-thumb]:rounded-b-[4px] [&::-webkit-slider-thumb]:border [&::-webkit-slider-thumb]:border-[#666] [&::-webkit-slider-thumb]:bg-[#f4f5f6]"
        />
        <button type="button" aria-label="Acercar">
          <Svg w={16} h={16}>
            <circle cx="8" cy="8" r="7.200" fill="#fafafa" stroke="#666" strokeWidth="1.200" />
            <path d="M4 8h8M8 4v8" stroke="#333" strokeWidth="2" />
          </Svg>
        </button>
      </div>
    </footer>
  );
}

/* ---------- task bar ---------- */

function FolderIcon() {
  return (
    <Svg w={22} h={20}>
      <path d="M0 2h8l2 2h12v15H0z" fill="#f9dc7f" />
      <path d="M1 5h20v13H1z" fill="#fde99f" />
      <path d="M4 19v-8h14v8h-4v-4H8v4z" fill="#36a1e0" />
    </Svg>
  );
}

function OfficeIcon({ color, tint, letter }: { color: string; tint: string; letter: string }) {
  return (
    <Svg w={22} h={22}>
      <path d="M1 3q0-2 2-2h18v20H1z" fill={tint} stroke={color} />
      <path d="M3 2h17v13H3z" fill="#fff" opacity="0.550" />
      <path d="M11 14l10-3v8l-9 2z" fill="#fff" stroke={tint} strokeWidth="0.600" />
      <path d="M13 16l6-2M13 18l6-2" stroke={color} strokeWidth="0.800" />
      <path d={letter} fill="none" stroke={color} strokeWidth="2.800" />
    </Svg>
  );
}

function NotepadIcon() {
  return (
    <Svg w={22} h={22}>
      <path d="M6 1l15 1v14l-4 5-17-4z" fill="#dfe6e8" />
      <path d="M7 2l12 1-5 15L1 16z" fill="#7fb7c4" />
      <path d="M7 2l12 1-2 6q-6-3-12 1z" fill="#b9dfe6" />
      <path d="M19 3l2 13-4 5-3-3z" fill="#b09a6c" />
    </Svg>
  );
}

function BalloonIcon() {
  return (
    <Svg w={18} h={25}>
      <path d="M9 0a9 9 0 0 1 9 8.500q0 4-6.500 10.500h-5Q0 12.500 0 8.500A9 9 0 0 1 9 0z" fill="#e8321f" />
      <path d="M1 5a9 9 0 0 1 16 0z" fill="#2448c8" />
      <path d="M4 2l2 3H4zM9 1l2 4H8zM14 3l1 3h-2z" fill="#3bb54a" />
      <path d="M1 5h16l1 4q-9 4-18 0z" fill="#f6a41c" />
      <path d="M3 5h3v5H3zM8 5h3v6H8zM13 5h3v4h-3z" fill="#fbe13b" />
      <path d="M6.500 12h5l-1 6h-3z" fill="#f47a1f" />
      <path d="M6 19l2 3h2l2-3" fill="none" stroke="#6b3aa8" />
      <path d="M7.500 21.500h3v3h-3z" fill="#c99a5b" />
    </Svg>
  );
}

function FeatherIcon() {
  return (
    <Svg w={22} h={22}>
      <rect x="1" y="2" width="20" height="20" rx="2" fill="#f4f7f9" />
      <path d="M0 0q7 1 10 6 4 6 5 12Q5 17 2 9z" fill="#2f87c9" />
      <path d="M3 9q6 3 12 9-8 0-11-6z" fill="#4aa655" />
      <path d="M1 1q5 5 8 10l7 8" fill="none" stroke="#1d4f93" strokeWidth="1.200" />
    </Svg>
  );
}

function CameraIcon() {
  return (
    <Svg w={24} h={24}>
      <path d="M2 0l8 5M10 6l12-5" stroke="#a5702d" strokeWidth="1.500" />
      <path d="M0 7l7 0-2 6 1 9M7 7l3 4M5 13l-4 9" fill="none" stroke="#2a43d4" strokeWidth="2" />
      <path d="M7 12h3V6h6v6h7v10H8z" fill="#85888d" stroke="#c5c7ca" />
      <circle cx="17" cy="18" r="4" fill="#4a4d52" stroke="#e0e0e0" />
      <circle cx="17" cy="19" r="2" fill="#d6a931" />
    </Svg>
  );
}

function FilezillaIcon() {
  return (
    <Svg w={24} h={24}>
      <rect x="0.500" y="0.500" width="23" height="23" fill="#b30000" stroke="#d53030" strokeDasharray="1 1" />
      <path d="M5 19L8 4.500h8M7 10.500h7" fill="none" stroke="#fff" strokeWidth="2.600" />
      <path d="M11 11.500h7l-7 8h8" fill="none" stroke="#fff" strokeWidth="2.400" />
    </Svg>
  );
}

function EdgeIcon() {
  return (
    <Svg w={20} h={22}>
      <path d="M0 10C1 3 5 0 10.500 0 17 0 20 5 20 10v2.500H7C7 16 10 17.800 13 17.800c2.300 0 4-.5 6-1.800v4.300c-2 1-4.300 1.700-7 1.700C6.500 22 3 18.500 3 13.500 3 10 5 7 8 5.500 4.500 6 1.800 7.500 0 10zm7-1h7.500c0-2.500-1.300-4-3.700-4S7.300 6.600 7 9z" fill="#0b7bdb" />
    </Svg>
  );
}

function MailIcon() {
  return (
    <Svg w={24} h={20}>
      <path d="M0 6l12-6 12 6v14H0z" fill="#fff" />
      <path d="M1 6.500h22L12.500 11l6.500 5.500L7.500 11z" fill="#05080d" />
    </Svg>
  );
}

function ChromeIcon() {
  return (
    <Svg w={22} h={22}>
      <path d="M11 11L1.500 5.500A11 11 0 0 1 20.500 5.500z" fill="#dd4b3e" />
      <path d="M11 11L20.500 5.500A11 11 0 0 1 11 22z" fill="#fdd14b" />
      <path d="M11 11v11A11 11 0 0 1 1.500 5.500z" fill="#1ea362" />
      <path d="M11 6h10l-5 8-5 8 3-8z" fill="#fdd14b" />
      <circle cx="11" cy="11" r="5.200" fill="#fff" />
      <circle cx="11" cy="11" r="4.200" fill="#4a8af4" />
    </Svg>
  );
}

function PhotoIcon() {
  return (
    <Svg w={17} h={22}>
      <path d="M.5.500h12l4 4v17H.5z" fill="#f3f3f3" stroke="#aaa" />
      <path d="M12.500.5v4h4" fill="#ccc" stroke="#999" />
      <rect x="3" y="6" width="11" height="12" fill="#0f77d1" />
      <path d="M3 18v-4l3-3 3 3 2-2 3 3v3z" fill="#b9dcf7" />
    </Svg>
  );
}

const APPS: { label: string; icon: ReactNode; state?: 'open' | 'active' }[] = [
  { label: 'Explorador de archivos', icon: <FolderIcon />, state: 'open' },
  { label: 'PowerPoint', icon: <OfficeIcon color="#d0501f" tint="#f4b391" letter="M6 18V5h4q3 0 3 3t-3 3H7" /> },
  { label: 'Bloc de notas', icon: <NotepadIcon /> },
  { label: 'Globo', icon: <BalloonIcon /> },
  { label: 'Pluma', icon: <FeatherIcon /> },
  { label: 'Cámara', icon: <CameraIcon /> },
  { label: 'FileZilla', icon: <FilezillaIcon /> },
  { label: 'Edge', icon: <EdgeIcon /> },
  { label: 'Correo', icon: <MailIcon /> },
  { label: 'Excel', icon: <OfficeIcon color="#3d8f35" tint="#b6dba5" letter="M4 4l9 12M13 4L4 16" /> },
  { label: 'Word', icon: <OfficeIcon color="#1f5cb5" tint="#b5cdee" letter="M3 4l2.500 12L9.500 5l3.500 11L16 4" />, state: 'active' },
  { label: 'Chrome', icon: <ChromeIcon />, state: 'open' },
  { label: 'Fotos', icon: <PhotoIcon />, state: 'open' },
];

function Tray() {
  return (
    <div className="ml-auto flex shrink-0 items-center text-[12px] text-white">
      <button type="button" aria-label="Contactos" className="mr-[21px]">
        <Svg w={15} h={16}>
          <g fill="none" stroke="#fff" strokeWidth="1.200">
            <circle cx="10.500" cy="3.500" r="2.700" />
            <circle cx="4.500" cy="8.500" r="2.400" />
            <path d="M1 15q0-4 3.500-4t3.500 3M8 8q2-2 4-1t2.500 4" />
          </g>
        </Svg>
      </button>
      <button type="button" aria-label="Mostrar iconos ocultos" className="mr-[11px]">
        <Svg w={13} h={8}>
          <path d="M1 7l5.500-5.500L12 7" fill="none" stroke="#fff" strokeWidth="1.300" />
        </Svg>
      </button>
      <button type="button" aria-label="Batería" className="mr-[11px]">
        <Svg w={16} h={12}>
          <path d="M5.500 3.500h8v7h-8zM15 5v4" fill="none" stroke="#fff" />
          <path d="M7 5h5v4H7z" fill="#fff" />
          <path d="M1 0v3M4 0v3M0 3h5v2l-1.500 1.500v3H5" fill="none" stroke="#fff" />
        </Svg>
      </button>
      <button type="button" aria-label="Red" className="mr-2">
        <Svg w={13} h={13}>
          <path d="M1 12A11 11 0 0 1 12 1M4 12a8 8 0 0 1 8-8M7 12a5 5 0 0 1 5-5" fill="none" stroke="#ddd" strokeWidth="1.200" />
          <circle cx="11.500" cy="11.500" r="1.400" fill="#fff" />
        </Svg>
      </button>
      <button type="button" aria-label="Volumen" className="mr-[10px]">
        <Svg w={17} h={14}>
          <path d="M.5 4.500h3l4-3.500v12l-4-3.500h-3zM9.500 4.500q1.500 2.500 0 5M11.800 3q2.500 4 0 8M14 1.500q4 5.500 0 11" fill="none" stroke="#fff" />
        </Svg>
      </button>
      <span className="w-[21px] text-center text-[11px]">ESP</span>
      <time className="ml-3 w-[62px] text-center text-[11px] leading-[18px] whitespace-nowrap">
        01:53 a. m.
        <br />
        27/04/2019
      </time>
      <button type="button" aria-label="Notificaciones" className="relative ml-4 h-6 w-6">
        <Svg w={17} h={16}>
          <path d="M0 0h17v12h-9v4l-4-4H0z" fill="#fff" />
          <path d="M3 3.500h11M3 6.500h11M3 9.500h6" stroke="#05080d" />
        </Svg>
        <span className="absolute right-0 -bottom-px flex size-[17px] items-center justify-center rounded-full border border-[#aaa] bg-[#333] text-[11px] leading-none">
          6
        </span>
      </button>
      <span className="ml-3 h-10 w-px bg-[#555]" />
      <span className="w-1" />
    </div>
  );
}

function Taskbar() {
  return (
    <div className="flex h-10 shrink-0 items-stretch bg-[#05090f]">
      <button type="button" aria-label="Inicio de Windows" className="flex w-12 items-center justify-center">
        <Svg w={17} h={16}>
          <path d="M0 2.300l7-1v6.200H0zM8 1.200L17 0v7.500H8zM0 8.500h7v6.200l-7-1zM8 8.500h9V16l-9-1.200z" fill="#fff" />
        </Svg>
      </button>
      <label className="flex w-[344px] items-center bg-[#f2f2f2] pr-[14px] pl-[9px]">
        <Svg w={22} h={22}>
          <circle cx="11" cy="11" r="9" fill="none" stroke="#111" strokeWidth="2.600" />
        </Svg>
        <input
          type="text"
          aria-label="Buscar"
          placeholder="Escribe aquí para buscar"
          className="ml-[9px] min-w-0 flex-1 bg-transparent text-[14px] outline-none placeholder:text-[#3c3c3c]"
        />
        <Svg w={13} h={17}>
          <path d="M4 .7h5v10H4zM1.500 8v4.500h10V8M6.500 12.500v4M4 16.300h5" fill="none" stroke={INK} strokeWidth="1.200" />
        </Svg>
      </label>
      <button type="button" aria-label="Vista de tareas" className="flex w-[50px] items-center justify-center">
        <Svg w={17} h={16}>
          <path d="M1.500 0v2.500h9V0M1.500 16v-2.500h9V16M.5 4.500h11v7H.5zM14.500 0v4M14.500 11v5" fill="none" stroke="#fff" />
          <rect x="13" y="5" width="3.500" height="4" fill="#fff" />
        </Svg>
      </button>
      {APPS.map((app) => (
        <button
          key={app.label}
          type="button"
          aria-label={app.label}
          className={`flex w-[47px] shrink-0 flex-col items-center ${app.state === 'active' ? 'bg-[#3a3e44]' : ''}`}
        >
          <span className="flex flex-1 items-center">{app.icon}</span>
          {app.state && <span className={`-mt-[2px] h-[2px] bg-[#76b9ed] ${app.state === 'active' ? 'w-full' : 'w-[39px]'}`} />}
        </button>
      ))}
      <Tray />
    </div>
  );
}

export default function App() {
  return (
    <div className="flex h-screen w-full flex-col overflow-hidden font-['Open_Sans','Noto_Sans',sans-serif] text-[11px]">
      <TitleBar />
      <TabRow />
      <div className="flex h-[85px] shrink-0 overflow-hidden bg-linear-to-b from-white to-[#eaecef]">
        <Clipboard />
        <FontGroup />
        <ParagraphGroup />
        <StylesGroup />
        <EditingGroup />
      </div>
      <WorkArea />
      <StatusBar />
      <Taskbar />
    </div>
  );
}
